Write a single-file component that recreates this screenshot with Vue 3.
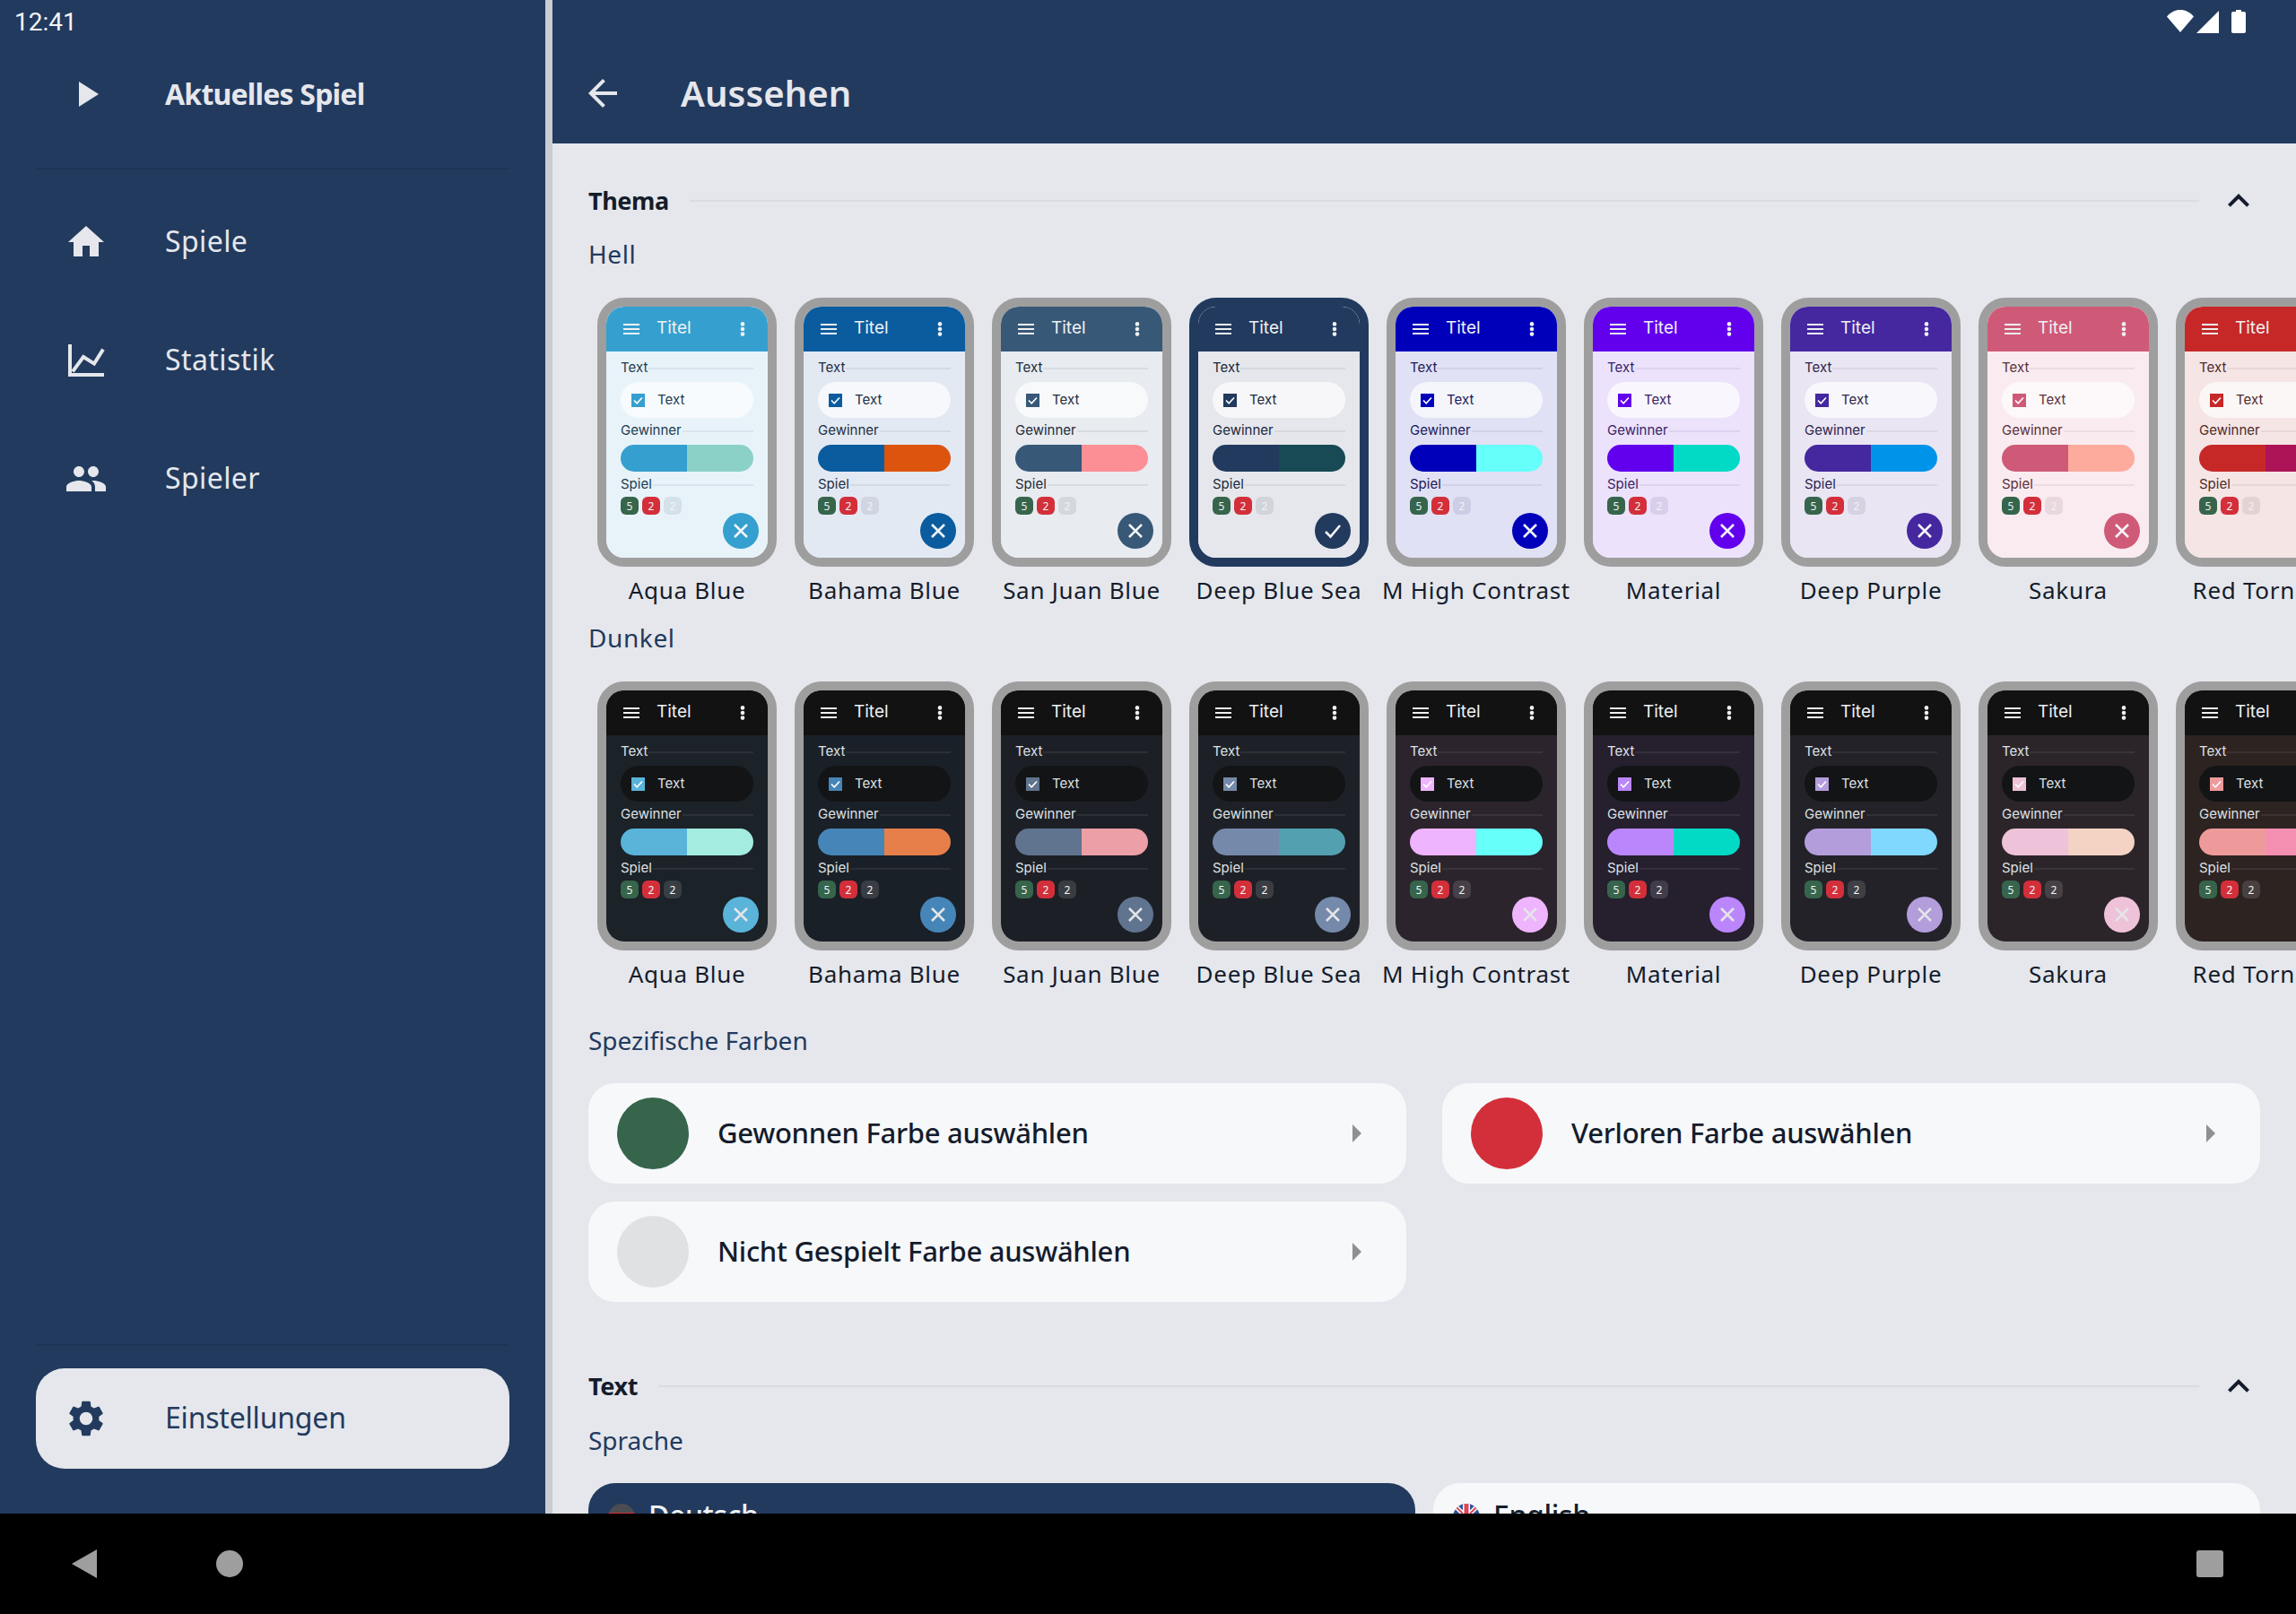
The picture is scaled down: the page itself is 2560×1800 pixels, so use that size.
<script setup>
const names = ['Aqua Blue','Bahama Blue','San Juan Blue','Deep Blue Sea','M High Contrast','Material','Deep Purple','Sakura','Red Tornado']
const lightC = [
  ['#35a0cf','#8bd1c7','#e8f3f9','#1f3c4e'],
  ['#0a5c9f','#dd540e','#e3e9f3','#1c2f44'],
  ['#375877','#fb8f95','#e8ebf0','#1f2c3c'],
  ['#223a5e','#174a54','#e5e7ec','#1c2838'],
  ['#0000ba','#66fff9','#e1e1f5','#1a1a5a'],
  ['#6200ee','#03dac5','#ece2fc','#3a1e66'],
  ['#4527a0','#0093ea','#e9e5f3','#2e2448'],
  ['#cf5a78','#fcab9c','#f9ebf0','#58303c'],
  ['#c62828','#ad1457','#f6e5e5','#4f2a2a']
]
const darkC = [
  ['#5ab3d9','#a3ecdf','#1b2228'],
  ['#4685b8','#e67f4a','#1a2028'],
  ['#60748f','#ec9fa6','#1c2026'],
  ['#7589aa','#52a0b0','#1d2127'],
  ['#eeb4fd','#66fff9','#2c242d'],
  ['#bb86fc','#03dac5','#251f2e'],
  ['#b39ddb','#80d8ff','#232229'],
  ['#eec2d8','#f4d3c4','#2b2529'],
  ['#ef9a9a','#f48fb1','#2d2321']
]
const light = names.map((name, i) => ({
  name,
  selected: i === 3,
  vars: { '--p': lightC[i][0], '--s': lightC[i][1], '--bg': lightC[i][2], '--tx': lightC[i][3], '--head': lightC[i][0], '--pill': 'rgba(255,255,255,.68)', '--mix': '10%', '--ico': '#f4f6f8' }
}))
const dark = names.map((name, i) => ({
  name,
  selected: false,
  vars: { '--p': darkC[i][0], '--s': darkC[i][1], '--bg': darkC[i][2], '--tx': '#dfe1e4', '--head': '#121212', '--pill': '#131415', '--mix': '15%', '--ico': '#e4e5e7' }
}))
const groups = [
  { title: 'Hell', themes: light },
  { title: 'Dunkel', themes: dark }
]
const colors = [
  { label: 'Gewonnen Farbe auswählen', color: '#36654c' },
  { label: 'Verloren Farbe auswählen', color: '#d32f3a' },
  { label: 'Nicht Gespielt Farbe auswählen', color: '#e0e1e3' }
]
const nav = [
  { label: 'Spiele', kind: 'home' },
  { label: 'Statistik', kind: 'chart' },
  { label: 'Spieler', kind: 'people' }
]
</script>

<template>
  <div class="root">
    <div class="stage">
      <aside class="side">
        <div class="item strong">
          <svg class="ico" viewBox="0 0 24 24"><path d="M8 5v14l11-7z" /></svg>
          <span>Aktuelles Spiel</span>
        </div>
        <div class="div first"></div>
        <div class="list">
          <div v-for="n in nav" :key="n.label" class="item">
            <svg class="ico" viewBox="0 0 24 24">
              <path v-if="n.kind === 'home'" d="M10 20v-6h4v6h5v-8h3L12 3 2 12h3v8z" />
              <template v-else-if="n.kind === 'chart'">
                <path d="M2 3h2v16h18v2H2z" />
                <path class="chart" d="M4.5 18.2l6-8.2 6 3.8 5-8" />
              </template>
              <path v-else d="M16 11c1.66 0 2.99-1.34 2.99-3S17.66 5 16 5c-1.66 0-3 1.34-3 3s1.34 3 3 3zm-8 0c1.66 0 2.99-1.34 2.99-3S9.66 5 8 5C6.34 5 5 6.34 5 8s1.34 3 3 3zm0 2c-2.33 0-7 1.17-7 3.5V19h14v-2.5c0-2.33-4.67-3.5-7-3.5zm8 0c-.29 0-.62.02-.97.05 1.16.84 1.97 1.97 1.97 3.45V19h6v-2.5c0-2.33-4.67-3.5-7-3.5z" />
            </svg>
            <span>{{ n.label }}</span>
          </div>
        </div>
        <div class="grow"></div>
        <div class="div last"></div>
        <div class="item active">
          <svg class="ico" viewBox="0 0 24 24"><path d="M19.14 12.94c.04-.3.06-.61.06-.94 0-.32-.02-.64-.07-.94l2.03-1.58c.18-.14.23-.41.12-.61l-1.92-3.32c-.12-.22-.37-.29-.59-.22l-2.39.96c-.5-.38-1.03-.7-1.62-.94l-.36-2.54c-.04-.24-.24-.41-.48-.41h-3.84c-.24 0-.43.17-.47.41l-.36 2.54c-.59.24-1.13.57-1.62.94l-2.39-.96c-.22-.08-.47 0-.59.22L2.74 8.87c-.12.21-.08.47.12.61l2.03 1.58c-.05.3-.09.63-.09.94s.02.64.07.94l-2.03 1.58c-.18.14-.23.41-.12.61l1.92 3.32c.12.22.37.29.59.22l2.39-.96c.5.38 1.03.7 1.62.94l.36 2.54c.05.24.24.41.48.41h3.84c.24 0 .44-.17.47-.41l.36-2.54c.59-.24 1.13-.56 1.62-.94l2.39.96c.22.08.47 0 .59-.22l1.92-3.32c.12-.22.07-.47-.12-.61l-2.01-1.58zM12 15.6c-1.98 0-3.6-1.62-3.6-3.6s1.62-3.6 3.6-3.6 3.6 1.62 3.6 3.6-1.62 3.6-3.6 3.6z" /></svg>
          <span>Einstellungen</span>
        </div>
      </aside>
      <div class="rule"></div>
      <main class="main">
        <header class="bar">
          <svg class="ico" viewBox="0 0 24 24"><path d="M20 11H7.83l5.59-5.59L12 4l-8 8 8 8 1.41-1.41L7.83 13H20v-2z" /></svg>
          <h1>Aussehen</h1>
        </header>
        <div class="scroll">
          <div class="sec">
            <strong>Thema</strong>
            <i></i>
            <svg class="ico" viewBox="0 0 24 24"><path d="M7.41 15.41L12 10.83l4.59 4.58L18 14l-6-6-6 6z" /></svg>
          </div>
          <template v-for="(g, gi) in groups" :key="g.title">
            <div class="sub" :class="gi === 0 ? 'hell' : 'dunkel'">{{ g.title }}</div>
            <div class="themes">
              <div v-for="t in g.themes" :key="t.name" class="theme">
                <div class="phone" :class="{ sel: t.selected }" :style="t.vars">
                  <div class="mini">
                    <div class="mhead">
                      <svg class="burger" viewBox="0 0 18 12"><path d="M0 0h18v2H0zM0 5h18v2H0zM0 10h18v2H0z" /></svg>
                      <span class="mtitle">Titel</span>
                      <svg class="dots" viewBox="0 0 6 16"><circle cx="3" cy="2.4" r="2.3" /><circle cx="3" cy="8" r="2.3" /><circle cx="3" cy="13.6" r="2.3" /></svg>
                    </div>
                    <div class="mbody">
                      <div class="mlabel"><span>Text</span><i></i></div>
                      <div class="mpill">
                        <svg class="mcheck" viewBox="0 0 15 15"><rect width="15" height="15" /><path d="M3 7.5l3.2 3.4L12 4.5" /></svg>
                        <span>Text</span>
                      </div>
                      <div class="mlabel"><span>Gewinner</span><i></i></div>
                      <div class="msplit"><b></b><b></b></div>
                      <div class="mlabel"><span>Spiel</span><i></i></div>
                      <div class="mbadges"><span class="win">5</span><span class="lose">2</span><span class="none">2</span></div>
                    </div>
                    <div class="mfab">
                      <svg viewBox="0 0 40 40">
                        <path v-if="t.selected" d="M12 21l5.5 5.5L28 14" />
                        <path v-else d="M13 13l14 14M27 13L13 27" />
                      </svg>
                    </div>
                  </div>
                </div>
                <div class="tname">{{ t.name }}</div>
              </div>
            </div>
          </template>
          <div class="sub spez">Spezifische Farben</div>
          <div class="cards">
            <div v-for="c in colors" :key="c.label" class="card">
              <span class="dot" :style="{ background: c.color }"></span>
              <span class="ctext">{{ c.label }}</span>
              <svg class="ico arrow" viewBox="0 0 24 24"><path d="M10 17l5-5-5-5v10z" /></svg>
            </div>
          </div>
          <div class="sec second">
            <strong>Text</strong>
            <i></i>
            <svg class="ico" viewBox="0 0 24 24"><path d="M7.41 15.41L12 10.83l4.59 4.58L18 14l-6-6-6 6z" /></svg>
          </div>
          <div class="sub lang">Sprache</div>
          <div class="langs">
            <div class="lcard on">
              <svg class="flag" viewBox="0 0 30 30">
                <clipPath id="fa"><circle cx="15" cy="15" r="15" /></clipPath>
                <g clip-path="url(#fa)"><rect width="30" height="10" fill="#4b4d52" /><rect y="10" width="30" height="10" fill="#d32f3a" /><rect y="20" width="30" height="10" fill="#ffce00" /></g>
              </svg>
              <span>Deutsch</span>
            </div>
            <div class="lcard">
              <svg class="flag" viewBox="0 0 30 30">
                <clipPath id="fb"><circle cx="15" cy="15" r="15" /></clipPath>
                <g clip-path="url(#fb)">
                  <rect width="30" height="30" fill="#2f5597" />
                  <path d="M0 0l30 30M30 0L0 30" stroke="#fff" stroke-width="5" />
                  <path d="M0 0l30 30M30 0L0 30" stroke="#e04455" stroke-width="2" />
                  <path d="M15 0v30M0 15h30" stroke="#fff" stroke-width="8" />
                  <path d="M15 0v30M0 15h30" stroke="#e04455" stroke-width="5" />
                </g>
              </svg>
              <span>English</span>
            </div>
          </div>
        </div>
      </main>
      <div class="time">12:41</div>
      <div class="status">
        <svg class="wifi" viewBox="0 0 30 25"><path d="M0 7.5C8-2.5 22-2.5 30 7.5L15 25z" /></svg>
        <svg class="signal" viewBox="0 0 25 25"><path d="M25 0v25H0z" /></svg>
        <svg class="batt" viewBox="0 0 16 26"><path d="M5 0h6v2h3a2 2 0 0 1 2 2v20a2 2 0 0 1-2 2H2a2 2 0 0 1-2-2V4a2 2 0 0 1 2-2h3z" /></svg>
      </div>
    </div>
    <footer class="sysnav">
      <svg class="nback" viewBox="0 0 28 32"><path d="M28 0v32L0 16z" /></svg>
      <span class="ncircle"></span>
      <span class="nsquare"></span>
    </footer>
  </div>
</template>

<style scoped>
.root { width: 2560px; height: 1800px; overflow: hidden; display: flex; flex-direction: column; font-family: "Noto Sans", sans-serif; background: #e5e7ec; color: #141c2c; }
.stage { position: relative; height: 1688px; display: flex; overflow: hidden; }
.side { width: 608px; flex: none; box-sizing: border-box; padding: 49px 40px 50px; background: #223a5e; color: #e5e7ec; display: flex; flex-direction: column; }
.rule { width: 8px; flex: none; background: #c9ccd3; }
.item { height: 112px; flex: none; display: flex; align-items: center; padding-left: 32px; font-size: 32px; letter-spacing: .4px; border-radius: 32px; }
.item span { margin-bottom: 3px; }
.item .ico { margin-right: 64px; }
.ico { width: 48px; height: 48px; flex: none; fill: currentColor; }
.chart { fill: none; stroke: currentColor; stroke-width: 2; }
.strong { font-weight: 700; font-size: 32px; letter-spacing: -.8px; }
.strong span { margin-bottom: 1px; }
.div { height: 2px; flex: none; background: #1f3556; }
.div.first { margin-top: 26px; }
.div.last { margin-bottom: 25px; }
.list { margin-top: 25px; display: flex; flex-direction: column; gap: 20px; }
.grow { flex: 1; }
.active { background: #e5e7ec; color: #223a5e; letter-spacing: -.2px; }
.main { flex: 1; min-width: 0; display: flex; flex-direction: column; }
.bar { height: 160px; flex: none; background: #223a5e; color: #e5e7ec; display: flex; align-items: center; padding-left: 32px; padding-top: 48px; box-sizing: border-box; }
.bar .ico { margin-right: 63px; }
.bar h1 { margin: 0 0 2px; font-size: 40px; font-weight: 600; letter-spacing: .1px; }
.scroll { flex: 1; overflow: hidden; padding: 40px 40px 0; }
.sec { height: 48px; display: flex; align-items: center; }
.sec strong { font-size: 27px; font-weight: 700; margin-bottom: 2px; letter-spacing: -.4px; }
.sec i { flex: 1; height: 2px; background: #d9dbe0; margin-left: 23px; margin-right: 20px; }
.sub { height: 40px; line-height: 38px; font-size: 28px; color: #223a5e; letter-spacing: .6px; }
.hell { margin-top: 16px; }
.dunkel { margin-top: 13px; }
.spez { margin-top: 34px; letter-spacing: 0; }
.lang { margin-top: 17px; letter-spacing: 0; }
.themes { margin-top: 28px; display: flex; width: 1980px; }
.theme { width: 220px; flex: none; display: flex; flex-direction: column; align-items: center; }
.phone { width: 200px; height: 300px; box-sizing: border-box; border: 10px solid #9e9e9e; border-radius: 30px; }
.phone.sel { border-color: #223a5e; }
.mini { position: relative; height: 100%; border-radius: 20px; overflow: hidden; background: var(--bg); color: var(--tx); font-family: Inter, sans-serif; }
.mhead { height: 50px; background: var(--head); color: #eef0f2; display: flex; align-items: flex-start; padding-left: 19px; box-sizing: border-box; }
.burger { width: 18px; height: 12px; margin-top: 19px; fill: currentColor; flex: none; }
.mtitle { font-size: 19px; line-height: 24px; margin-top: 12px; margin-left: 19px; }
.dots { width: 6px; height: 16px; margin: 17px 25px 0 auto; fill: currentColor; flex: none; }
.mbody { padding: 8px 16px 0; }
.mlabel { height: 20px; display: flex; align-items: center; font-size: 15px; line-height: 20px; }
.mlabel span { margin-bottom: 0; }
.mlabel i { flex: 1; height: 2px; margin-left: 1px; margin-top: 1px; background: color-mix(in srgb, var(--tx) 8%, var(--bg)); }
.mpill { height: 40px; margin: 6px 0 4px; border-radius: 20px; background: var(--pill); display: flex; align-items: center; padding-left: 12px; font-size: 15px; }
.mpill span { margin-bottom: 2px; }
.mcheck { width: 15px; height: 15px; margin-right: 14px; flex: none; }
.mcheck rect { fill: var(--p); }
.mcheck path { fill: none; stroke: #fff; stroke-width: 1.6; }
.msplit { height: 30px; margin: 6px 0 4px; border-radius: 15px; overflow: hidden; display: flex; }
.msplit b { flex: 1; background: var(--p); }
.msplit b + b { background: var(--s); }
.mbadges { margin-top: 4px; display: flex; gap: 4px; }
.mbadges span { width: 20px; height: 20px; border-radius: 6px; display: flex; align-items: center; justify-content: center; font-size: 12px; font-family: "Noto Sans", sans-serif; color: #f1f3f4; }
.win { background: #36654c; }
.lose { background: #d32f3a; }
.none { background: color-mix(in srgb, var(--tx) var(--mix), var(--bg)); }
.mfab { position: absolute; right: 10px; bottom: 10px; width: 40px; height: 40px; border-radius: 50%; background: var(--p); }
.mfab svg { display: block; width: 40px; height: 40px; }
.mfab path { fill: none; stroke: var(--ico); stroke-width: 2.6; }
.tname { height: 40px; line-height: 38px; margin-top: 7px; font-size: 26px; letter-spacing: .7px; white-space: nowrap; }
.cards { margin-top: 27px; display: grid; grid-template-columns: 912px 912px; gap: 20px 40px; }
.card { height: 112px; box-sizing: border-box; border-radius: 30px; background: #f6f8fa; display: flex; align-items: center; padding: 0 32px; }
.dot { width: 80px; height: 80px; border-radius: 50%; flex: none; margin-right: 32px; }
.ctext { flex: 1; font-size: 31px; font-weight: 500; letter-spacing: -.27px; margin-bottom: 3px; }
.arrow { fill: #8f9092; }
.second { margin-top: 70px; }
.langs { margin-top: 27px; display: grid; grid-template-columns: 922px 922px; gap: 20px; }
.lcard { height: 112px; border-radius: 30px; background: #f6f8fa; display: flex; align-items: flex-start; padding: 23px 22px 0; box-sizing: border-box; font-size: 32px; font-weight: 500; letter-spacing: -.4px; }
.lcard.on { background: #223a5e; color: #eef0f3; }
.lcard span { line-height: 34px; margin-top: -4px; }
.flag { width: 30px; height: 30px; margin-right: 15px; flex: none; }
.time { position: absolute; left: 16px; top: 8px; font-family: Roboto, sans-serif; font-size: 28px; line-height: 34px; color: #f4f5f7; }
.status { position: absolute; left: 2416px; top: 11px; display: flex; align-items: flex-start; fill: #fff; }
.wifi { width: 30px; height: 25px; margin-right: 3px; }
.signal { width: 25px; height: 25px; margin-top: 1px; margin-right: 14px; }
.batt { width: 16px; height: 26px; }
.sysnav { height: 112px; flex: none; background: #000; display: flex; align-items: center; padding: 0 81px 0 80px; }
.nback { width: 28px; height: 32px; fill: #9e9e9e; }
.ncircle { width: 30px; height: 30px; border-radius: 50%; background: #9e9e9e; margin-left: 133px; }
.nsquare { width: 30px; height: 30px; border-radius: 3px; background: #9e9e9e; margin-left: auto; }
</style>

<style>
html, body { margin: 0; background: #e5e7ec; }
</style>
